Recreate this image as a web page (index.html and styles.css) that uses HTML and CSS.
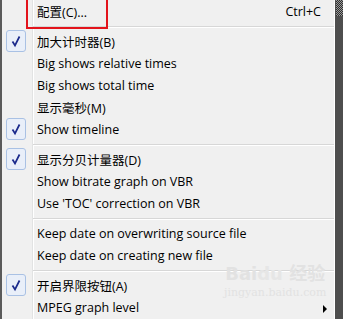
FILE: index.html
```html
<!DOCTYPE html>
<html lang="en">
<head>
    <meta charset="UTF-8">
    <title>Menu</title>
    <link rel="stylesheet" href="styles.css">
</head>
<body>
    <div class="frame">
        <div class="edge-left"></div>
        <div class="menu">
            <div class="item"><span class="icon"></span><span class="label">配置(C)...</span><span class="key">Ctrl+C</span></div>
            <div class="sep"></div>
            <div class="item"><span class="icon"><span class="check"><svg width="20" height="22" viewBox="0 0 20 22"><path d="M6.5 11.5 L9 15.5 L13.5 6.5" fill="none" stroke="#1b2a8c" stroke-width="1.7"/></svg></span></span><span class="label">加大计时器(B)</span></div>
            <div class="item"><span class="icon"></span><span class="label">Big shows relative times</span></div>
            <div class="item"><span class="icon"></span><span class="label">Big shows total time</span></div>
            <div class="item"><span class="icon"></span><span class="label">显示毫秒(M)</span></div>
            <div class="item"><span class="icon"><span class="check"><svg width="20" height="22" viewBox="0 0 20 22"><path d="M6.5 11.5 L9 15.5 L13.5 6.5" fill="none" stroke="#1b2a8c" stroke-width="1.7"/></svg></span></span><span class="label">Show timeline</span></div>
            <div class="sep"></div>
            <div class="item"><span class="icon"><span class="check"><svg width="20" height="22" viewBox="0 0 20 22"><path d="M6.5 11.5 L9 15.5 L13.5 6.5" fill="none" stroke="#1b2a8c" stroke-width="1.7"/></svg></span></span><span class="label">显示分贝计量器(D)</span></div>
            <div class="item"><span class="icon"></span><span class="label">Show bitrate graph on VBR</span></div>
            <div class="item"><span class="icon"></span><span class="label">Use 'TOC' correction on VBR</span></div>
            <div class="sep"></div>
            <div class="item"><span class="icon"></span><span class="label">Keep date on overwriting source file</span></div>
            <div class="item"><span class="icon"></span><span class="label">Keep date on creating new file</span></div>
            <div class="sep"></div>
            <div class="item"><span class="icon"><span class="check"><svg width="20" height="22" viewBox="0 0 20 22"><path d="M6.5 11.5 L9 15.5 L13.5 6.5" fill="none" stroke="#1b2a8c" stroke-width="1.7"/></svg></span></span><span class="label">开启界限按钮(A)</span></div>
            <div class="item"><span class="icon"></span><span class="label">MPEG graph level</span><span class="arrow"></span></div>

            <div class="highlight"></div>
            <div class="watermark">
                <div class="wm-logo">Bai<span class="wm-du">du</span>&nbsp;经验</div>
                <div class="wm-url">jingyan.baidu.com</div>
            </div>
        </div>
        <div class="edge-right"></div>
    </div>
</body>
</html>
```

FILE: styles.css
```css
body {
    margin: 0;
    padding: 0;
    background-color: #f0f0f0;
    font-family: 'Open Sans', 'Noto Sans CJK SC', sans-serif;
    font-size: 12.5px;
    color: #000;
    overflow: hidden;
}

.frame {
    display: flex;
    height: 319px;
}

.edge-left {
    width: 2px;
    background-color: #5a5a5a;
}

.menu {
    position: relative;
    flex: 1;
    background: linear-gradient(to right, transparent 30px, #e2e3e3 30px, #e2e3e3 31px, #ffffff 31px, #ffffff 32px, transparent 32px);
}

.edge-right {
    position: relative;
    width: 8px;
    border-left: 1px solid #ffffff;
    background-color: #4e4e4e;
}

.edge-right::before {
    content: "";
    position: absolute;
    left: 1px;
    top: 0;
    width: 7px;
    height: 16px;
    background: repeating-conic-gradient(#2e2e2e 0 25%, #9a9a9a 0 50%);
    background-size: 2px 2px;
}

.item {
    display: flex;
    align-items: center;
    height: 22px;
}

.icon {
    width: 31px;
    height: 22px;
    flex-shrink: 0;
}

.check {
    display: block;
    width: 18px;
    height: 20px;
    margin-left: 4px;
    border: 1px solid #a9c1e4;
    border-radius: 3px;
    background-color: #e9eff9;
}

.check svg {
    display: block;
    margin: -1px 0 0 -1px;
}

.label {
    padding-left: 4px;
    flex: 1;
    white-space: nowrap;
}

.key {
    padding-right: 13px;
}

.arrow {
    width: 0;
    height: 0;
    border-top: 4px solid transparent;
    border-bottom: 4px solid transparent;
    border-left: 4px solid #000;
    margin-right: 7px;
    margin-top: 3px;
}

.sep {
    height: 0;
    margin: 4px 0 2px 31px;
    border-top: 1px solid #d7d7d7;
    border-bottom: 1px solid #ffffff;
}

.highlight {
    position: absolute;
    left: 24px;
    top: -4px;
    width: 78px;
    height: 29px;
    border: 2px solid #e3131b;
}

.watermark {
    position: absolute;
    left: 222px;
    top: 262px;
    text-align: center;
    white-space: nowrap;
}

.wm-logo {
    font-family: 'DejaVu Sans', 'Noto Sans CJK SC', sans-serif;
    font-size: 18px;
    font-weight: bold;
    line-height: 24px;
    color: #e2e2e2;
}

.wm-du {
    color: #e6e6e6;
}

.wm-url {
    font-family: 'DejaVu Serif', serif;
    font-size: 11px;
    line-height: 14px;
    color: #e2e2e2;
}
```
